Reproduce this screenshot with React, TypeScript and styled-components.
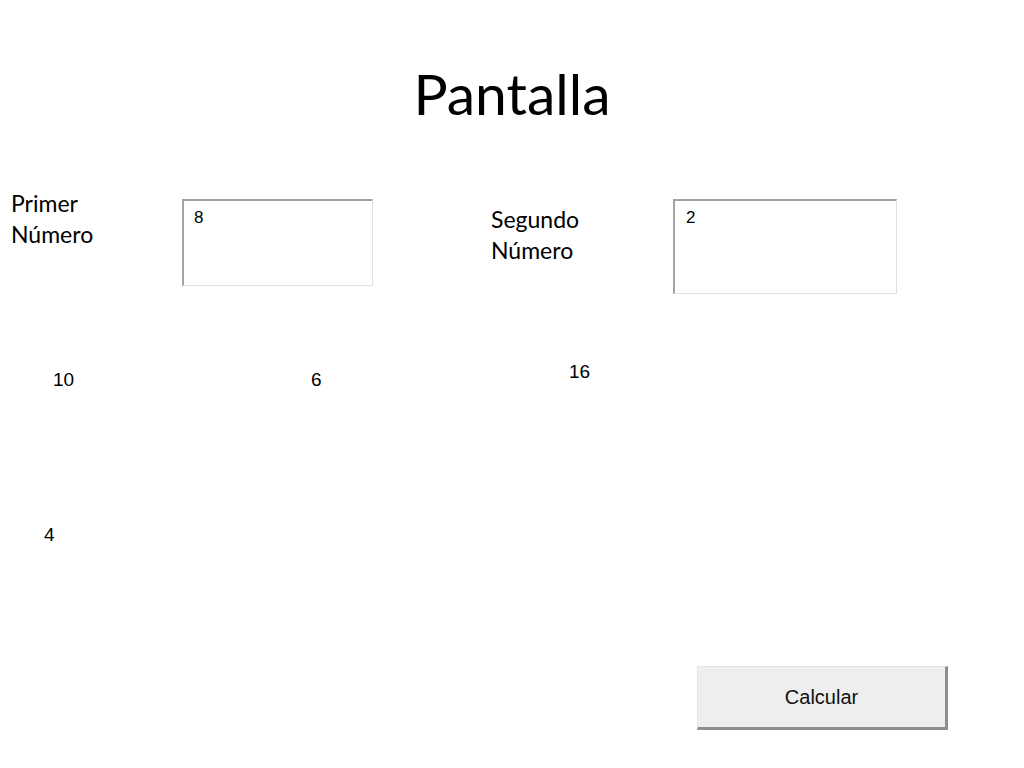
import React from 'react';
import styled, { createGlobalStyle } from 'styled-components';

const GlobalStyle = createGlobalStyle`
  html, body {
    margin: 0;
    padding: 0;
    background: #ffffff;
  }
  body {
    font-family: 'Liberation Sans', Arial, sans-serif;
    color: #000000;
  }
`;

const Page = styled.div`
  width: 1024px;
  height: 768px;
  display: flex;
  flex-direction: column;
  overflow: hidden;
`;

const Title = styled.h1`
  margin: 59px 0 0;
  font-family: Lato, 'Open Sans', sans-serif;
  font-weight: 400;
  font-size: 57px;
  line-height: 68px;
  text-align: center;
`;

const FieldRow = styled.div`
  display: flex;
  align-items: flex-start;
  margin-top: 61px;
  padding-left: 11px;
`;

const Label = styled.div<{ $width: number; $top: number; $left?: number }>`
  width: ${p => p.$width}px;
  margin-top: ${p => p.$top}px;
  margin-left: ${p => p.$left || 0}px;
  font-family: Lato, 'Open Sans', sans-serif;
  font-size: 23px;
  line-height: 31px;
  color: #000000;
`;

const Box = styled.div<{ $width: number; $height: number; $top: number; $pad: number }>`
  box-sizing: border-box;
  width: ${p => p.$width}px;
  height: ${p => p.$height}px;
  margin-top: ${p => p.$top}px;
  padding: 8px 0 0 ${p => p.$pad}px;
  border-top: 2px solid #a3a3a3;
  border-left: 2px solid #a3a3a3;
  border-right: 1px solid #e2e2e2;
  border-bottom: 1px solid #e2e2e2;
  font-size: 17px;
  line-height: 17px;
  background: #ffffff;
`;

const ResultRow = styled.div`
  display: grid;
  grid-template-columns: repeat(3, 258px);
  align-items: start;
  margin-top: 68px;
  padding-left: 53px;
`;

const Result = styled.div<{ $drop?: number }>`
  margin-top: ${p => p.$drop || 0}px;
  font-size: 19px;
  line-height: 19px;
`;

const LoneRow = styled.div`
  margin-top: 136px;
  padding-left: 44px;
  font-size: 19px;
  line-height: 19px;
`;

const ButtonRow = styled.div`
  display: flex;
  justify-content: flex-end;
  margin-top: 122px;
  padding-right: 76px;
`;

const CalcButton = styled.button`
  box-sizing: border-box;
  width: 251px;
  height: 64px;
  padding: 0;
  background: #eeeeee;
  border-top: 1px solid #e4e4e4;
  border-left: 1px solid #e4e4e4;
  border-right: 3px solid #8e8e8e;
  border-bottom: 3px solid #8e8e8e;
  border-radius: 0;
  font-family: 'Liberation Sans', Arial, sans-serif;
  font-size: 20px;
  color: #111111;
  cursor: pointer;
`;

function App() {
  const primero = 8;
  const segundo = 2;

  return (
    <Page>
      <GlobalStyle />
      <Title>Pantalla</Title>
      <FieldRow>
        <Label $width={171} $top={0}>
          Primer
          <br />
          Número
        </Label>
        <Box $width={191} $height={87} $top={11} $pad={10}>
          {primero}
        </Box>
        <Label $width={182} $top={16} $left={118}>
          Segundo
          <br />
          Número
        </Label>
        <Box $width={224} $height={95} $top={11} $pad={11}>
          {segundo}
        </Box>
      </FieldRow>
      <ResultRow>
        <Result $drop={8}>{primero + segundo}</Result>
        <Result $drop={8}>{primero - segundo}</Result>
        <Result>{primero * segundo}</Result>
      </ResultRow>
      <LoneRow>{primero / segundo}</LoneRow>
      <ButtonRow>
        <CalcButton>Calcular</CalcButton>
      </ButtonRow>
    </Page>
  );
}

export default App;
